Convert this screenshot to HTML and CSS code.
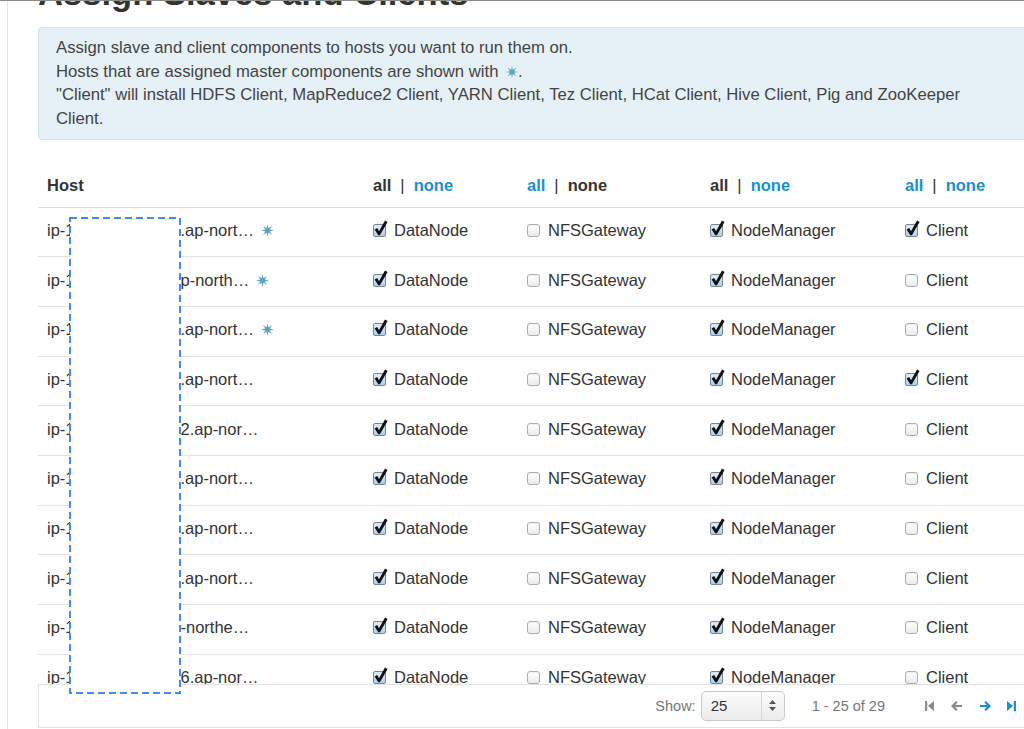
FILE: index.html
```html
<!DOCTYPE html>
<html lang="en">
<head>
<meta charset="utf-8">
<title>Assign Slaves and Clients</title>
<link rel="stylesheet" href="styles.css">
</head>
<body>
<svg class="defs" width="0" height="0" aria-hidden="true">
  <symbol id="star" viewBox="-6 -6 12 12">
    <polygon points="6,0 2.03,0.84 4.24,4.24 0.84,2.03 0,6 -0.84,2.03 -4.24,4.24 -2.03,0.84 -6,0 -2.03,-0.84 -4.24,-4.24 -0.84,-2.03 0,-6 0.84,-2.03 4.24,-4.24 2.03,-0.84"/>
  </symbol>
  <symbol id="tick" viewBox="0 0 15 16">
    <path d="M1.6 9.6 L4.2 8.1 L6 11.2 L12 0.6 L14.6 2.1 L6.9 15.2 L5.3 15.2 Z"/>
  </symbol>
</svg>
<div class="page">
  <div class="content">
    <h1 class="title">Assign Slaves and Clients</h1>
    <div class="info">
      <p>Assign slave and client components to hosts you want to run them on.</p>
      <p>Hosts that are assigned master components are shown with <svg class="star star-sm"><use href="#star"/></svg>.</p>
      <p>"Client" will install HDFS Client, MapReduce2 Client, YARN Client, Tez Client, HCat Client, Hive Client, Pig and ZooKeeper Client.</p>
    </div>

    <div class="grid-wrap">
      <div class="row head">
        <div class="cell">Host</div>
        <div class="cell"><span class="cur">all</span><span class="sep">|</span><span class="lnk">none</span></div>
        <div class="cell"><span class="lnk">all</span><span class="sep">|</span><span class="cur">none</span></div>
        <div class="cell"><span class="cur">all</span><span class="sep">|</span><span class="lnk">none</span></div>
        <div class="cell"><span class="lnk">all</span><span class="sep">|</span><span class="lnk">none</span></div>
      </div>

      <div class="row">
        <div class="cell">ip-1<span class="gap"></span>.ap-nort…<svg class="star"><use href="#star"/></svg></div>
        <div class="cell"><span class="cb on"><svg class="tick"><use href="#tick"/></svg></span>DataNode</div>
        <div class="cell"><span class="cb"></span>NFSGateway</div>
        <div class="cell"><span class="cb on"><svg class="tick"><use href="#tick"/></svg></span>NodeManager</div>
        <div class="cell"><span class="cb on"><svg class="tick"><use href="#tick"/></svg></span>Client</div>
      </div>
      <div class="row">
        <div class="cell">ip-1<span class="gap"></span>p-north…<svg class="star"><use href="#star"/></svg></div>
        <div class="cell"><span class="cb on"><svg class="tick"><use href="#tick"/></svg></span>DataNode</div>
        <div class="cell"><span class="cb"></span>NFSGateway</div>
        <div class="cell"><span class="cb on"><svg class="tick"><use href="#tick"/></svg></span>NodeManager</div>
        <div class="cell"><span class="cb"></span>Client</div>
      </div>
      <div class="row">
        <div class="cell">ip-1<span class="gap"></span>.ap-nort…<svg class="star"><use href="#star"/></svg></div>
        <div class="cell"><span class="cb on"><svg class="tick"><use href="#tick"/></svg></span>DataNode</div>
        <div class="cell"><span class="cb"></span>NFSGateway</div>
        <div class="cell"><span class="cb on"><svg class="tick"><use href="#tick"/></svg></span>NodeManager</div>
        <div class="cell"><span class="cb"></span>Client</div>
      </div>
      <div class="row">
        <div class="cell">ip-1<span class="gap"></span>.ap-nort…</div>
        <div class="cell"><span class="cb on"><svg class="tick"><use href="#tick"/></svg></span>DataNode</div>
        <div class="cell"><span class="cb"></span>NFSGateway</div>
        <div class="cell"><span class="cb on"><svg class="tick"><use href="#tick"/></svg></span>NodeManager</div>
        <div class="cell"><span class="cb on"><svg class="tick"><use href="#tick"/></svg></span>Client</div>
      </div>
      <div class="row">
        <div class="cell">ip-1<span class="gap"></span>2.ap-nor…</div>
        <div class="cell"><span class="cb on"><svg class="tick"><use href="#tick"/></svg></span>DataNode</div>
        <div class="cell"><span class="cb"></span>NFSGateway</div>
        <div class="cell"><span class="cb on"><svg class="tick"><use href="#tick"/></svg></span>NodeManager</div>
        <div class="cell"><span class="cb"></span>Client</div>
      </div>
      <div class="row">
        <div class="cell">ip-1<span class="gap"></span>.ap-nort…</div>
        <div class="cell"><span class="cb on"><svg class="tick"><use href="#tick"/></svg></span>DataNode</div>
        <div class="cell"><span class="cb"></span>NFSGateway</div>
        <div class="cell"><span class="cb on"><svg class="tick"><use href="#tick"/></svg></span>NodeManager</div>
        <div class="cell"><span class="cb"></span>Client</div>
      </div>
      <div class="row">
        <div class="cell">ip-1<span class="gap"></span>.ap-nort…</div>
        <div class="cell"><span class="cb on"><svg class="tick"><use href="#tick"/></svg></span>DataNode</div>
        <div class="cell"><span class="cb"></span>NFSGateway</div>
        <div class="cell"><span class="cb on"><svg class="tick"><use href="#tick"/></svg></span>NodeManager</div>
        <div class="cell"><span class="cb"></span>Client</div>
      </div>
      <div class="row">
        <div class="cell">ip-1<span class="gap"></span>.ap-nort…</div>
        <div class="cell"><span class="cb on"><svg class="tick"><use href="#tick"/></svg></span>DataNode</div>
        <div class="cell"><span class="cb"></span>NFSGateway</div>
        <div class="cell"><span class="cb on"><svg class="tick"><use href="#tick"/></svg></span>NodeManager</div>
        <div class="cell"><span class="cb"></span>Client</div>
      </div>
      <div class="row">
        <div class="cell">ip-1<span class="gap"></span>-northe…</div>
        <div class="cell"><span class="cb on"><svg class="tick"><use href="#tick"/></svg></span>DataNode</div>
        <div class="cell"><span class="cb"></span>NFSGateway</div>
        <div class="cell"><span class="cb on"><svg class="tick"><use href="#tick"/></svg></span>NodeManager</div>
        <div class="cell"><span class="cb"></span>Client</div>
      </div>
      <div class="row">
        <div class="cell">ip-1<span class="gap"></span>6.ap-nor…</div>
        <div class="cell"><span class="cb on"><svg class="tick"><use href="#tick"/></svg></span>DataNode</div>
        <div class="cell"><span class="cb"></span>NFSGateway</div>
        <div class="cell"><span class="cb on"><svg class="tick"><use href="#tick"/></svg></span>NodeManager</div>
        <div class="cell"><span class="cb"></span>Client</div>
      </div>
    </div>

    <div class="pager">
      <span class="show">Show:</span>
      <div class="select">
        <span class="val">25</span>
        <span class="arrows">
          <svg width="7" height="11" viewBox="0 0 7 11"><polygon points="3.5,0 7,4 0,4" /><polygon points="0,7 7,7 3.5,11"/></svg>
        </span>
      </div>
      <span class="range">1 - 25 of 29</span>
      <svg class="nav first" width="9" height="10" viewBox="0 0 9 10"><rect x="0" y="0" width="2.2" height="10"/><polygon points="9,0 9,10 3,5"/></svg>
      <svg class="nav prev" width="11" height="10" viewBox="0 0 11 10"><path d="M5 0 L0 5 L5 10 L6.6 8.4 L4.3 6.1 H11 V3.9 H4.3 L6.6 1.6 Z"/></svg>
      <svg class="nav next blue" width="11" height="10" viewBox="0 0 11 10"><path d="M6 0 L11 5 L6 10 L4.4 8.4 L6.7 6.1 H0 V3.9 H6.7 L4.4 1.6 Z"/></svg>
      <svg class="nav last blue" width="9" height="10" viewBox="0 0 9 10"><polygon points="0,0 6,5 0,10"/><rect x="6.8" y="0" width="2.2" height="10"/></svg>
    </div>
  </div>

  <svg class="redact" width="112" height="477" viewBox="0 0 112 477" aria-hidden="true">
    <rect x="1" y="1" width="110" height="475" fill="#ffffff" stroke="#3f8cf2" stroke-width="2" stroke-dasharray="7 4"/>
  </svg>
</div>
</body>
</html>
```

FILE: styles.css
```css
html, body {
  margin: 0;
  padding: 0;
  background: #ffffff;
}

body {
  font-family: "Liberation Sans", Arial, Helvetica, sans-serif;
  color: #333333;
  overflow: hidden;
}

.defs {
  position: absolute;
  width: 0;
  height: 0;
}

.page {
  position: relative;
  height: 729px;
  box-sizing: border-box;
  border-top: 1px solid #8c8c8c;
  overflow: hidden;
}

.content {
  display: flow-root;
  box-sizing: border-box;
  margin-left: 7px;
  border-left: 1px solid #e4e4e4;
  padding-left: 30px;
  height: 100%;
  width: 1031px;
}

.title {
  margin: -25px 0 0;
  font-size: 34.6px;
  line-height: 34px;
  font-weight: bold;
  color: #333333;
  white-space: nowrap;
}

.info {
  margin-top: 17px;
  width: 1000px;
  box-sizing: border-box;
  background: #e5f1f6;
  border: 1px solid #d2e4ec;
  border-radius: 4px;
  padding: 8px 45px 8px 17px;
  font-size: 16.7px;
  line-height: 23.7px;
  color: #444444;
}

.info p {
  margin: 0;
}

.star {
  width: 13px;
  height: 13px;
  fill: #5ba4bf;
  margin-left: 7px;
  flex: none;
}

.star-sm {
  width: 12px;
  height: 12px;
  margin-left: 3px;
  vertical-align: -1px;
}

.grid-wrap {
  margin-top: 26px;
  height: 518px;
  overflow: hidden;
  width: 1000px;
}

.row {
  display: grid;
  grid-template-columns: 326px 154px 183px 195px 142px;
  align-items: center;
  box-sizing: border-box;
  height: 49.67px;
  padding-bottom: 3px;
  border-bottom: 1px solid #e2e2e2;
  font-size: 16.5px;
  color: #333333;
}

.row.head {
  height: 42px;
  padding-bottom: 2px;
  font-weight: bold;
  border-bottom: 1px solid #dddddd;
}

.cell {
  padding-left: 9px;
  white-space: nowrap;
  display: flex;
  align-items: center;
}

.gap {
  display: inline-block;
  width: 106px;
}

.cur {
  color: #333333;
}

.lnk {
  color: #1b8fd2;
}

.sep {
  font-weight: normal;
  color: #333333;
  margin: 0 9px;
}

.cb {
  position: relative;
  display: inline-block;
  width: 13px;
  height: 13px;
  box-sizing: border-box;
  border: 1px solid #adadad;
  border-radius: 3px;
  background: linear-gradient(#ffffff, #ebebeb);
  box-shadow: inset 0 1px 1px rgba(0, 0, 0, 0.06);
  margin-right: 8px;
  flex: none;
}

.cb.on {
  border-color: #7b8894;
  border-radius: 2px;
  background: linear-gradient(#e6f2fc, #a9cff0);
}

.tick {
  position: absolute;
  left: -1px;
  top: -5px;
  width: 15px;
  height: 16px;
  fill: #111111;
}

.pager {
  width: 1000px;
  height: 44px;
  box-sizing: border-box;
  border: 1px solid #e2e2e2;
  display: flex;
  align-items: center;
  justify-content: flex-end;
  padding-right: 21px;
}

.show {
  font-size: 14.5px;
  color: #777777;
  margin-right: 5px;
}

.select {
  width: 84px;
  height: 30px;
  box-sizing: border-box;
  border: 1px solid #c9c9c9;
  border-radius: 5px;
  background: linear-gradient(#fdfdfd, #ebebeb);
  display: flex;
  align-items: center;
  font-size: 15px;
  color: #333333;
}

.select .val {
  flex: 1;
  padding-left: 9px;
}

.select .arrows {
  width: 22px;
  height: 100%;
  border-left: 1px solid #d6d6d6;
  display: flex;
  align-items: center;
  justify-content: center;
  fill: #555555;
}

.range {
  margin-left: 27px;
  font-size: 14.5px;
  color: #777777;
}

.nav {
  fill: #8a8a8a;
  flex: none;
}

.nav.first {
  margin-left: 40px;
}

.nav.prev {
  margin-left: 17px;
}

.nav.next {
  margin-left: 18px;
}

.nav.last {
  margin-left: 16px;
}

.nav.blue {
  fill: #1b8fd2;
}

.redact {
  position: absolute;
  left: 69px;
  top: 216px;
}
```
